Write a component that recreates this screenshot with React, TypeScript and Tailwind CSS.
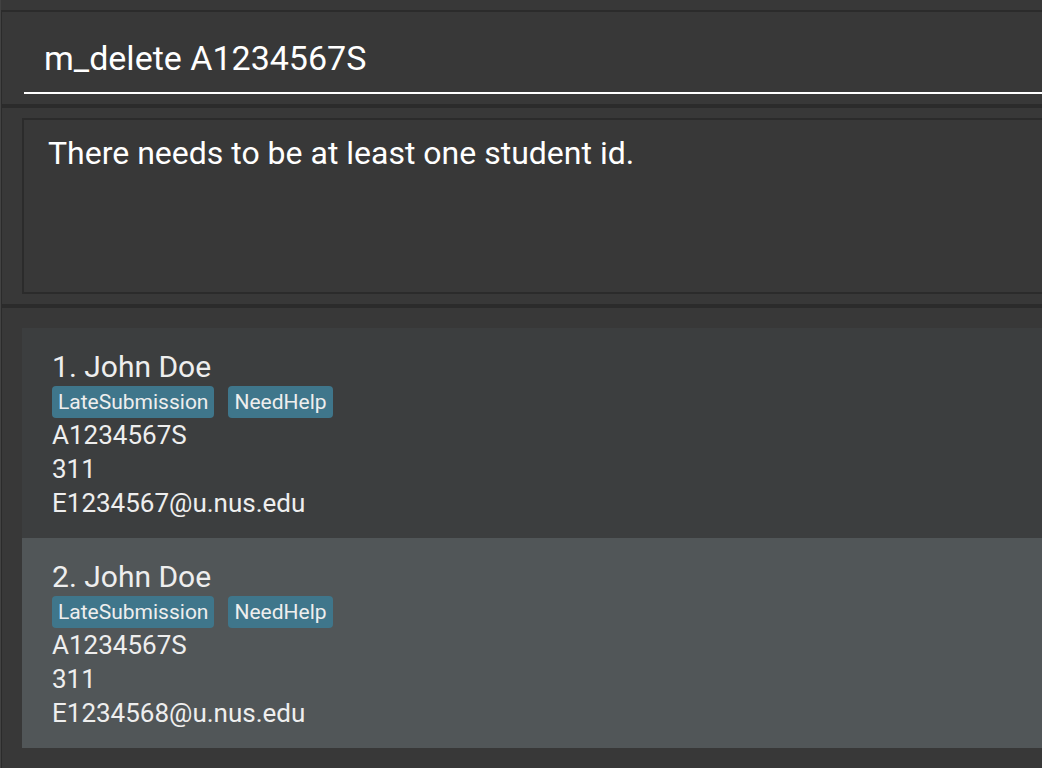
const people = [
  { id: 1, email: "E1234567@u.nus.edu", bg: "bg-[#3c3e3f]" },
  { id: 2, email: "E1234568@u.nus.edu", bg: "bg-[#515658]" },
];

export default function App() {
  return (
    <main className="flex min-h-screen flex-col border-l border-[#424242] bg-[#383838] font-['Roboto','Liberation_Sans',sans-serif] text-white">
      <div className="h-3 border-b-2 border-[#2b2b2b]" />
      <div className="flex flex-1 flex-col border-l border-[#2b2b2b]">
        <form className="border-b-4 border-[#2b2b2b] pt-5 pb-2.5 pl-[22px]" onSubmit={(e) => e.preventDefault()}>
          <input
            aria-label="Command"
            defaultValue="m_delete A1234567S"
            spellCheck={false}
            className="block h-[62px] w-full border-b-2 border-white bg-transparent px-5 pb-2 text-[34px] outline-none"
          />
        </form>
        <section className="border-b-4 border-[#2b2b2b] py-2.5 pl-5">
          <output className="block h-44 border-2 border-r-0 border-[#2b2b2b] px-6 pt-3 text-[32px] leading-[42px]">
            There needs to be at least one student id.
          </output>
        </section>
        <ul className="pt-5 pl-5">
          {people.map((p) => (
            <li key={p.id} className={`h-[210px] pt-5 pl-[30px] text-[#eeeeee] ${p.bg}`}>
              <h2 className="text-[30px] leading-[38px]">{p.id}. John Doe</h2>
              <div className="flex gap-3.5 text-[21px] leading-8">
                <span className="rounded bg-[#3f768b] px-1.5">LateSubmission</span>
                <span className="rounded bg-[#3f768b] px-1.5">NeedHelp</span>
              </div>
              <div className="text-[26px] leading-[34px]">
                <p>A1234567S</p>
                <p>311</p>
                <p>{p.email}</p>
              </div>
            </li>
          ))}
        </ul>
      </div>
    </main>
  );
}
